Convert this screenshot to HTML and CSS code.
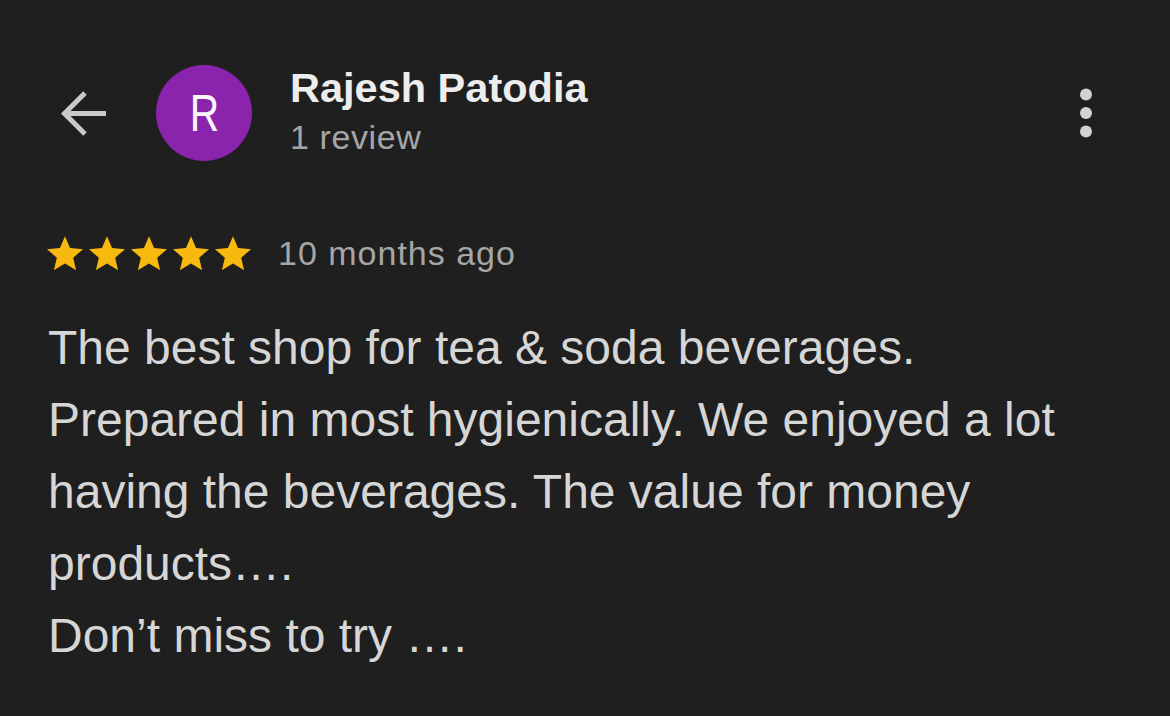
FILE: index.html
```html
<!DOCTYPE html>
<html lang="en">
<head>
<meta charset="utf-8">
<title>Review</title>
<link rel="stylesheet" href="styles.css">
</head>
<body>
<div class="page">
  <header class="header">
    <button class="back" aria-label="Back">
      <svg width="48" height="47" viewBox="0 0 48 47"><path d="M46 23.5H5M25 3L4.5 23.5L25 44" fill="none" stroke="#c9c9c9" stroke-width="5"/></svg>
    </button>
    <div class="avatar"><span class="initial">R</span></div>
    <div class="who">
      <div class="name">Rajesh Patodia</div>
      <div class="count">1 review</div>
    </div>
    <button class="more" aria-label="More">
      <svg width="12" height="50" viewBox="0 0 12 50"><circle cx="6" cy="6.5" r="6" fill="#d2d2d2"/><circle cx="6" cy="25" r="6" fill="#d2d2d2"/><circle cx="6" cy="43.5" r="6" fill="#d2d2d2"/></svg>
    </button>
  </header>

  <div class="meta">
    <div class="stars">
      <svg class="star" viewBox="2 2 20 19.3"><path d="M12 17.27L18.18 21l-1.64-7.03L22 9.24l-7.19-.61L12 2 9.19 8.63 2 9.24l5.46 4.73L5.82 21z"/></svg>
      <svg class="star" viewBox="2 2 20 19.3"><path d="M12 17.27L18.18 21l-1.64-7.03L22 9.24l-7.19-.61L12 2 9.19 8.63 2 9.24l5.46 4.73L5.82 21z"/></svg>
      <svg class="star" viewBox="2 2 20 19.3"><path d="M12 17.27L18.18 21l-1.64-7.03L22 9.24l-7.19-.61L12 2 9.19 8.63 2 9.24l5.46 4.73L5.82 21z"/></svg>
      <svg class="star" viewBox="2 2 20 19.3"><path d="M12 17.27L18.18 21l-1.64-7.03L22 9.24l-7.19-.61L12 2 9.19 8.63 2 9.24l5.46 4.73L5.82 21z"/></svg>
      <svg class="star" viewBox="2 2 20 19.3"><path d="M12 17.27L18.18 21l-1.64-7.03L22 9.24l-7.19-.61L12 2 9.19 8.63 2 9.24l5.46 4.73L5.82 21z"/></svg>
    </div>
    <span class="when">10 months ago</span>
  </div>

  <p class="text">The best shop for tea &amp; soda beverages.<br>Prepared in most hygienically. We enjoyed a lot having the beverages. The value for money products….<br>Don’t miss to try ….</p>
</div>
</body>
</html>
```

FILE: styles.css
```css
html, body {
  margin: 0;
  padding: 0;
  background: #1f1f1f;
}
body {
  font-family: "Liberation Sans", Arial, sans-serif;
  width: 1170px;
  height: 716px;
  overflow: hidden;
}
.page {
  padding-top: 65px;
}
.header {
  display: flex;
  align-items: center;
  height: 96px;
  padding-left: 60px;
  padding-right: 78px;
}
.back, .more {
  background: none;
  border: 0;
  padding: 0;
  margin: 0;
  display: flex;
}
.avatar {
  width: 96px;
  height: 96px;
  border-radius: 50%;
  background: #8b24ad;
  color: #fbf6fd;
  display: flex;
  align-items: center;
  justify-content: center;
  margin-left: 48px;
}
.initial {
  font-size: 51px;
  line-height: 1;
  display: inline-block;
  transform: scaleX(0.8);
}
.who {
  margin-left: 38px;
  padding-bottom: 4px;
}
.name {
  font-size: 41.5px;
  font-weight: bold;
  line-height: 46px;
  color: #ededed;
}
.count {
  font-size: 34px;
  letter-spacing: 0.6px;
  line-height: 40px;
  margin-top: 6px;
  color: #a6a6a6;
}
.more {
  margin-left: auto;
}
.meta {
  display: flex;
  align-items: center;
  height: 40px;
  margin-top: 72px;
  padding-left: 47px;
}
.stars {
  display: flex;
  gap: 6px;
}
.star {
  width: 36px;
  height: 35px;
  fill: #f8b90f;
}
.when {
  margin-left: 27px;
  font-size: 34px;
  letter-spacing: 1px;
  line-height: 40px;
  color: #a6a6a6;
}
.text {
  margin: 39px 0 0;
  padding: 0 48px;
  font-size: 48px;
  line-height: 72px;
  color: #d6d6d6;
}
```
